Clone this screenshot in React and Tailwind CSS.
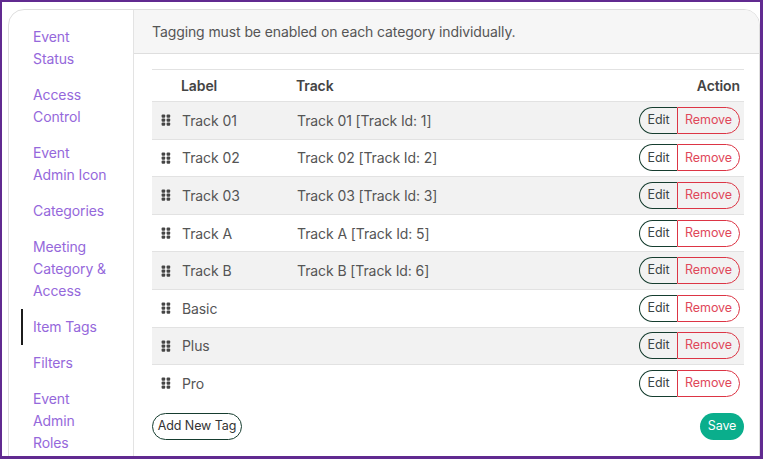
import React from "react";

const menu = [
  { label: "Event Status" },
  { label: "Access Control" },
  { label: "Event Admin Icon" },
  { label: "Categories" },
  { label: "Meeting Category & Access" },
  { label: "Item Tags", active: true },
  { label: "Filters" },
  { label: "Event Admin Roles" },
];

const tags = [
  { label: "Track 01", track: "Track 01", id: 1 },
  { label: "Track 02", track: "Track 02", id: 2 },
  { label: "Track 03", track: "Track 03", id: 3 },
  { label: "Track A", track: "Track A", id: 5 },
  { label: "Track B", track: "Track B", id: 6 },
  { label: "Basic" },
  { label: "Plus" },
  { label: "Pro" },
];

const DragHandle = () => (
  <svg width="10" height="12" viewBox="0 0 10 12" className="shrink-0">
    {[0.4, 4.4, 8.4].map((y) =>
      [0.6, 5.6].map((x) => (
        <rect key={`${x}-${y}`} x={x} y={y} width="3.6" height="3.4" rx="1" fill="#454545" />
      )),
    )}
  </svg>
);

const TagRow = ({ tag, striped }) => (
  <div
    className={`flex items-center h-[37.6px] border-t border-[#e2e2e2] pl-[9px] pr-[4px] ${striped ? "bg-[#f2f2f2]" : "bg-white"}`}
  >
    <DragHandle />
    <span className="ml-[11px] w-[115px] text-[#555]">{tag.label}</span>
    <span className="text-[#555]">
      {tag.id ? `${tag.track} [Track Id: ${tag.id}]` : ""}
    </span>
    <div className="ml-auto flex h-[27px] text-[12.5px]">
      <button className="w-[38px] flex items-center justify-center border border-r-0 border-[#163d2f] rounded-l-full text-[#3a4444]">
        Edit
      </button>
      <button className="w-[63px] flex items-center justify-center border border-[#dc3545] rounded-r-full text-[#e0475a]">
        Remove
      </button>
    </div>
  </div>
);

export default function App() {
  return (
    <div
      className="w-[763px] h-[459px] overflow-hidden bg-white border-[#612a90] border-l-2 border-t-2 border-r-[3px] border-b-[3px] pl-[6px] pt-[7px] text-[14px] tracking-[-0.1px]"
      style={{ fontFamily: "Inter, 'Noto Sans', sans-serif" }}
    >
      <div className="flex h-[480px] border border-[#dedede] rounded-t-[16px] overflow-hidden">
        {/* Sidebar */}
        <nav className="w-[125px] shrink-0 border-r border-[#e3e3e3] pt-[9px] pl-[12px]">
          {menu.map((item) => (
            <div
              key={item.label}
              className={`py-[7px] leading-[22px] pl-[10px] text-[#9568db] border-l-2 ${item.active ? "border-[#1c1c1c]" : "border-transparent"}`}
            >
              <div className="max-w-[78px]">{item.label}</div>
            </div>
          ))}
        </nav>

        {/* Main */}
        <main className="flex-1 min-w-0">
          <div className="h-[44px] bg-[#f6f6f6] border-b border-[#dedede] flex items-center pl-[18px] text-[#555]">
            Tagging must be enabled on each category individually.
          </div>

          <div className="pl-[18px] pr-[15px] pt-[15px]">
            <div className="border-t border-[#e2e2e2]">
              <div className="flex items-center h-[31px] pl-[29px] pr-[4px] font-semibold text-[#444]">
                <span className="w-[115px]">Label</span>
                <span>Track</span>
                <span className="ml-auto">Action</span>
              </div>
              {tags.map((tag, i) => (
                <TagRow key={tag.label} tag={tag} striped={i % 2 === 0} />
              ))}
            </div>

            <div className="flex items-center justify-between mt-[11px] text-[12.5px]">
              <button className="h-[27px] w-[90px] rounded-full border border-[#163d2f] text-[#333]">
                Add New Tag
              </button>
              <button className="h-[27px] w-[44px] rounded-full bg-[#0aae8c] text-white">
                Save
              </button>
            </div>
          </div>
        </main>
      </div>
    </div>
  );
}
